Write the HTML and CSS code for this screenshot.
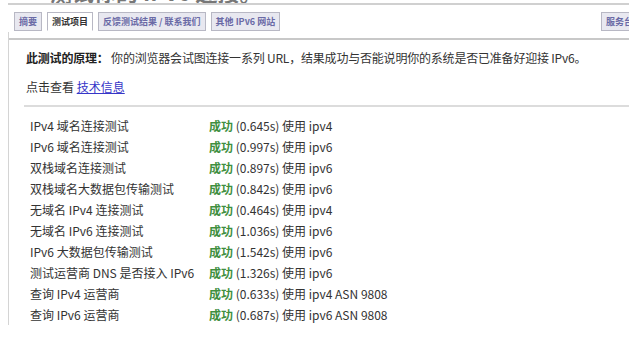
FILE: index.html
```html
<!DOCTYPE html>
<html lang="zh-CN">
<head>
<meta charset="utf-8">
<title>IPv6 连接测试</title>
<link rel="stylesheet" href="styles.css">
</head>
<body>
<div class="page">
  <div class="title"><span class="title-text">测试你的 IPv6 连接。</span></div>
  <div class="tabs">
    <span class="tab">摘要</span>
    <span class="tab active">测试项目</span>
    <span class="tab">反馈测试结果 / 联系我们</span>
    <span class="tab">其他 IPv6 网站</span>
    <span class="tab right">服务台</span>
  </div>
  <div class="panel">
    <div class="rule"></div>
    <p class="intro"><b>此测试的原理：</b> 你的浏览器会试图连接一系列 URL，结果成功与否能说明你的系统是否已准备好迎接 IPv6。</p>
    <p class="more">点击查看 <a href="#">技术信息</a></p>
    <div class="sep"></div>
    <div class="rows">
      <span>IPv4 域名连接测试</span><span><em>成功</em> (0.645s) 使用 ipv4</span>
      <span>IPv6 域名连接测试</span><span><em>成功</em> (0.997s) 使用 ipv6</span>
      <span>双栈域名连接测试</span><span><em>成功</em> (0.897s) 使用 ipv6</span>
      <span>双栈域名大数据包传输测试</span><span><em>成功</em> (0.842s) 使用 ipv6</span>
      <span>无域名 IPv4 连接测试</span><span><em>成功</em> (0.464s) 使用 ipv4</span>
      <span>无域名 IPv6 连接测试</span><span><em>成功</em> (1.036s) 使用 ipv6</span>
      <span>IPv6 大数据包传输测试</span><span><em>成功</em> (1.542s) 使用 ipv6</span>
      <span>测试运营商 DNS 是否接入 IPv6</span><span><em>成功</em> (1.326s) 使用 ipv6</span>
      <span>查询 IPv4 运营商</span><span><em>成功</em> (0.633s) 使用 ipv4 ASN 9808</span>
      <span>查询 IPv6 运营商</span><span><em>成功</em> (0.687s) 使用 ipv6 ASN 9808</span>
    </div>
  </div>
</div>
</body>
</html>
```

FILE: styles.css
```css
html, body {
  margin: 0;
  padding: 0;
  background: #fff;
}
body {
  font-family: "Noto Sans CJK SC", "Noto Sans", sans-serif;
  font-size: 12px;
  color: #333;
}
.page {
  margin-left: 8px;
  width: 621px;
  overflow: hidden;
}
.title {
  height: 3px;
  overflow: hidden;
  border-bottom: 2px solid #d0d0d0;
  padding-left: 42px;
}
.title-text {
  display: block;
  font-size: 22px;
  line-height: 22px;
  margin-top: -20px;
  font-weight: bold;
  color: #777;
}
.tabs {
  display: flex;
  gap: 5px;
  padding-left: 6px;
  margin-top: 7px;
  height: 19px;
}
.tab {
  display: flex;
  align-items: center;
  box-sizing: border-box;
  height: 19px;
  padding: 0 4px;
  border: 1px solid #b8b8c4;
  background: #e8e8f0;
  color: #6a6aa6;
  font-size: 9px;
  font-weight: bold;
  white-space: nowrap;
}
.tab.active {
  background: #fff;
  color: #333;
  border-bottom-color: #fff;
}
.tab.right {
  margin-left: auto;
  margin-right: -9px;
}
.panel {
  border-left: 1px solid #d4d4d4;
  margin-top: 1px;
  padding-top: 6px;
}
.rule {
  height: 2px;
  background: #c8c8c8;
}
.intro {
  margin: 9px 0 0 17px;
  line-height: 18px;
  white-space: nowrap;
  letter-spacing: -0.2px;
}
.intro b {
  color: #222;
}
.more {
  margin: 11px 0 0 17px;
  line-height: 18px;
}
.more a {
  color: #3636c8;
}
.sep {
  margin: 9px 0 0 15px;
  height: 2px;
  background: #dcdcdc;
}
.rows {
  display: grid;
  grid-template-columns: 179px auto;
  grid-auto-rows: 21px;
  align-items: center;
  padding: 8px 0 0 21px;
  line-height: 21px;
}
.rows em {
  font-style: normal;
  font-weight: bold;
  color: #3f8f3f;
}
```
